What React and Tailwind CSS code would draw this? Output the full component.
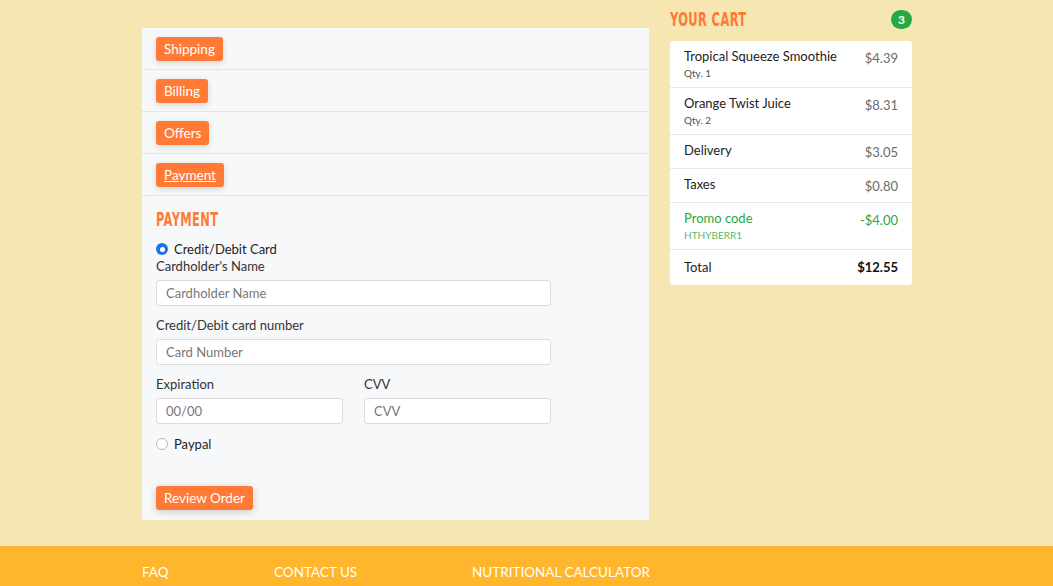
import React from "react";

const font = { fontFamily: "Lato, 'Open Sans', sans-serif" };
const display = {
  fontFamily: "'DejaVu Sans Condensed', 'DejaVu Sans', sans-serif",
  transform: "scale(0.75, 1.12)",
  transformOrigin: "left center",
};

function TabRow({ label, active }) {
  return (
    <div className="flex items-start border-b border-[#e3e4e6] px-[14px] pt-[9px] pb-[8px]">
      <button
        className={`block h-[24px] rounded-[3px] bg-[#ff7a37] px-[8px] text-[13.5px] leading-[24px] text-white shadow-[0_2px_6px_rgba(0,0,0,0.15)] ${active ? "underline" : ""}`}
      >
        {label}
      </button>
    </div>
  );
}

function Field({ label, placeholder, className = "" }) {
  return (
    <div className={className}>
      <div className="text-[13px] leading-[16px] text-[#333]">{label}</div>
      <input
        placeholder={placeholder}
        className="mt-[6px] block h-[26px] w-full rounded-[3px] border border-[#dcdcdc] bg-white px-[9px] text-[13px] text-[#333] placeholder:text-[#777] outline-none"
      />
    </div>
  );
}

function Row({ title, sub, price, className = "", priceClass = "text-[#6b6b6b]" }) {
  return (
    <div className={`flex items-start justify-between border-b border-[#e9e9e9] px-[14px] pt-[7px] pb-[7px] ${className}`}>
      <div>
        <div className="text-[13px] leading-[17px]">{title}</div>
        {sub && <div className="mt-[1px] text-[10px] leading-[14px] opacity-80">{sub}</div>}
      </div>
      <div className={`mt-[2px] text-[13px] leading-[17px] ${priceClass}`}>{price}</div>
    </div>
  );
}

export default function App() {
  return (
    <div className="min-h-[586px] w-full overflow-hidden bg-[#f6e7b2]" style={font}>
      <div className="flex gap-[21px] pl-[142px] pt-[8px] pb-[26px]">
        <div className="mt-[20px] w-[507px] bg-[#f7f8fa]">
          <TabRow label="Shipping" />
          <TabRow label="Billing" />
          <TabRow label="Offers" />
          <TabRow label="Payment" active />
          <div className="px-[14px] pt-[13px] pb-[10px]">
            <h2 className="text-[17px] leading-[20px] font-bold uppercase tracking-[0.5px] text-[#ff7a37]" style={display}>
              Payment
            </h2>
            <label className="mt-[12px] flex items-center gap-[6px] text-[13px] leading-[16px] text-[#222]">
              <span className="flex h-[12px] w-[12px] items-center justify-center rounded-full bg-[#1a73e8]">
                <span className="h-[5px] w-[5px] rounded-full bg-white" />
              </span>
              Credit/Debit Card
            </label>
            <Field className="mt-[1px] w-[395px]" label="Cardholder's Name" placeholder="Cardholder Name" />
            <Field className="mt-[11px] w-[395px]" label="Credit/Debit card number" placeholder="Card Number" />
            <div className="mt-[11px] flex w-[395px] gap-[21px]">
              <Field className="flex-1" label="Expiration" placeholder="00/00" />
              <Field className="flex-1" label="CVV" placeholder="CVV" />
            </div>
            <label className="mt-[12px] flex items-center gap-[6px] text-[13px] leading-[16px] text-[#222]">
              <span className="h-[12px] w-[12px] rounded-full border border-[#bbb] bg-white" />
              Paypal
            </label>
            <button className="mt-[34px] block h-[24px] rounded-[3px] bg-[#ff7a37] px-[8px] text-[13.5px] leading-[24px] text-white shadow-[0_2px_8px_rgba(0,0,0,0.18)]">
              Review Order
            </button>
          </div>
        </div>

        <div className="w-[242px]">
          <div className="flex h-[23px] items-center justify-between">
            <h2 className="text-[17px] font-bold uppercase tracking-[0.5px] text-[#ff7a37]" style={display}>
              Your Cart
            </h2>
            <span className="flex h-[19px] w-[21px] items-center justify-center rounded-full bg-[#28a745] text-[12px] font-bold text-white">
              3
            </span>
          </div>
          <div className="mt-[10px] overflow-hidden rounded-[3px] bg-white text-[#222]">
            <Row title="Tropical Squeeze Smoothie" sub="Qty. 1" price="$4.39" />
            <Row title="Orange Twist Juice" sub="Qty. 2" price="$8.31" />
            <Row title="Delivery" price="$3.05" />
            <Row title="Taxes" price="$0.80" />
            <Row title="Promo code" sub="HTHYBERR1" price="-$4.00" className="text-[#28a745]" priceClass="text-[#28a745]" />
            <div className="flex justify-between px-[14px] pt-[9px] pb-[9px]">
              <div className="text-[13px] leading-[17px]">Total</div>
              <div className="text-[13px] font-bold leading-[17px] text-[#111]">$12.55</div>
            </div>
          </div>
        </div>
      </div>

      <footer className="flex h-[60px] bg-[#ffb62c] pl-[142px] pt-[16px] text-[13.5px] leading-[20px] uppercase text-white">
        <span className="w-[132px]">FAQ</span>
        <span className="w-[198px]">Contact Us</span>
        <span>Nutritional Calculator</span>
      </footer>
    </div>
  );
}
